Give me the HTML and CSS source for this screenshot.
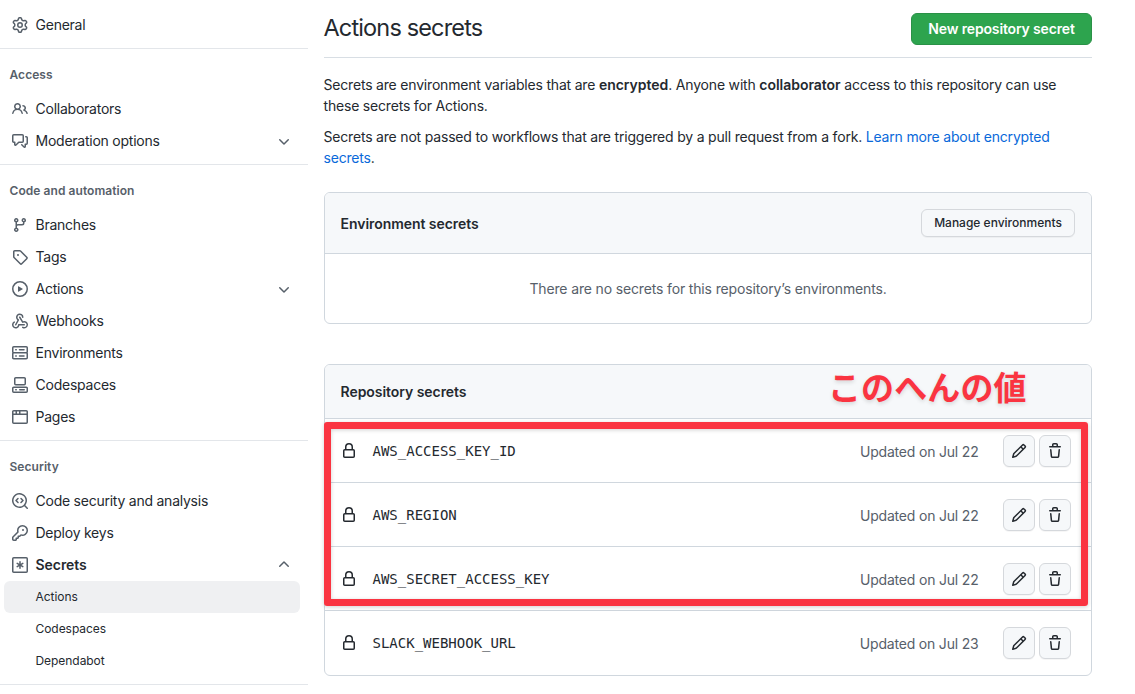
FILE: index.html
```html
<!DOCTYPE html>
<html lang="en">
<head>
<meta charset="utf-8">
<title>Actions secrets</title>
<link rel="stylesheet" href="styles.css">
</head>
<body>
<svg class="sprite" aria-hidden="true">
  <symbol id="gear" viewBox="0 0 16 16"><path fill-rule="evenodd" d="M7.429 1.525a6.593 6.593 0 011.142 0c.036.003.108.036.137.146l.289 1.105c.147.56.55.967.997 1.189.174.086.341.183.501.29.417.278.97.423 1.53.27l1.102-.303c.11-.03.175.016.195.046.219.31.41.641.573.989.014.031.022.11-.059.19l-.815.806c-.411.406-.562.957-.53 1.456a4.588 4.588 0 010 .582c-.032.499.119 1.05.53 1.456l.815.806c.08.08.073.159.059.19a6.494 6.494 0 01-.573.99c-.02.029-.086.074-.195.045l-1.103-.303c-.559-.153-1.112-.008-1.529.27-.16.107-.327.204-.5.29-.449.222-.851.628-.998 1.189l-.289 1.105c-.029.11-.101.143-.137.146a6.613 6.613 0 01-1.142 0c-.036-.003-.108-.037-.137-.146l-.289-1.105c-.147-.56-.55-.967-.997-1.189a4.502 4.502 0 01-.501-.29c-.417-.278-.97-.423-1.53-.27l-1.102.303c-.11.03-.175-.016-.195-.046a6.492 6.492 0 01-.573-.989c-.014-.031-.022-.11.059-.19l.815-.806c.411-.406.562-.957.53-1.456a4.587 4.587 0 010-.582c.032-.499-.119-1.05-.53-1.456l-.815-.806c-.08-.08-.073-.159-.059-.19a6.44 6.44 0 01.573-.99c.02-.029.086-.075.195-.045l1.103.303c.559.153 1.112.008 1.529-.27.16-.107.327-.204.5-.29.449-.222.851-.628.998-1.189l.289-1.105c.029-.11.101-.143.137-.146zM8 0c-.236 0-.47.01-.701.03-.743.065-1.29.615-1.458 1.261l-.29 1.106c-.017.066-.078.158-.211.224a5.994 5.994 0 00-.668.386c-.123.082-.233.09-.3.071L3.27 2.776c-.644-.177-1.392.02-1.82.63a7.977 7.977 0 00-.704 1.217c-.315.675-.111 1.422.363 1.891l.815.806c.05.048.098.147.088.294a6.084 6.084 0 000 .772c.01.147-.038.246-.088.294l-.815.806c-.474.469-.678 1.216-.363 1.891.2.428.436.835.704 1.218.428.609 1.176.806 1.82.63l1.103-.303c.066-.019.176-.011.299.071.213.143.436.272.668.386.133.066.194.158.212.224l.289 1.106c.169.646.715 1.196 1.458 1.26a8.094 8.094 0 001.402 0c.743-.064 1.29-.614 1.458-1.26l.29-1.106c.017-.066.078-.158.211-.224a5.98 5.98 0 00.668-.386c.123-.082.233-.09.3-.071l1.102.302c.644.177 1.392-.02 1.82-.63.268-.382.505-.789.704-1.217.315-.675.111-1.422-.364-1.891l-.814-.806c-.05-.048-.098-.147-.088-.294a6.1 6.1 0 000-.772c-.01-.147.039-.246.088-.294l.814-.806c.475-.469.679-1.216.364-1.891a7.992 7.992 0 00-.704-1.218c-.428-.609-1.176-.806-1.82-.63l-1.103.303c-.066.019-.176.011-.299-.071a5.991 5.991 0 00-.668-.386c-.133-.066-.194-.158-.212-.224L10.16 1.29C9.99.645 9.444.095 8.701.031A8.094 8.094 0 008 0zm1.5 8a1.5 1.5 0 11-3 0 1.5 1.5 0 013 0zM11 8a3 3 0 11-6 0 3 3 0 016 0z"/></symbol>
  <symbol id="people" viewBox="0 0 16 16"><path fill-rule="evenodd" d="M5.5 3.5a2 2 0 100 4 2 2 0 000-4zM2 5.5a3.5 3.5 0 115.898 2.549 5.507 5.507 0 013.034 4.084.75.75 0 11-1.482.235 4.001 4.001 0 00-7.9 0 .75.75 0 01-1.482-.236A5.507 5.507 0 013.102 8.05 3.49 3.49 0 012 5.5zM11 4a.75.75 0 100 1.5 1.5 1.5 0 01.666 2.844.75.75 0 00-.416.672v.352a.75.75 0 00.574.73c1.2.289 2.162 1.2 2.522 2.372a.75.75 0 101.434-.44 5.01 5.01 0 00-2.56-3.012A3 3 0 0011 4z"/></symbol>
  <symbol id="comments" viewBox="0 0 16 16"><path fill-rule="evenodd" d="M1.5 2.75a.25.25 0 01.25-.25h8.5a.25.25 0 01.25.25v5.5a.25.25 0 01-.25.25h-3.500a.75.75 0 00-.53.22L3.500 11.440V9.250a.75.75 0 00-.75-.75h-1a.25.25 0 01-.25-.25v-5.500zM1.750 1A1.750 1.750 0 000 2.750v5.500C0 9.216.784 10 1.750 10H2v1.543a1.457 1.457 0 002.487 1.030L7.061 10h3.189A1.750 1.750 0 0012 8.250v-5.500A1.750 1.750 0 0010.250 1h-8.500zM14.500 4.750a.25.25 0 00-.25-.25h-.5a.75.75 0 110-1.500h.5c.966 0 1.750.784 1.750 1.750v5.500A1.750 1.750 0 0114.250 12H14v1.543a1.457 1.457 0 01-2.487 1.030L9.220 12.280a.75.75 0 111.060-1.060l2.220 2.220v-2.190a.75.75 0 01.75-.75h1a.25.25 0 00.25-.25v-5.500z"/></symbol>
  <symbol id="branch" viewBox="0 0 16 16"><path fill-rule="evenodd" d="M11.750 2.500a.75.75 0 100 1.500.75.75 0 000-1.500zm-2.250.75a2.250 2.250 0 113 2.122V6A2.500 2.500 0 0110 8.500H6a1 1 0 00-1 1v1.128a2.251 2.251 0 11-1.500 0V5.372a2.250 2.250 0 111.500 0v1.836A2.492 2.492 0 016 7h4a1 1 0 001-1v-.628A2.250 2.250 0 019.500 3.250zM4.250 12a.75.75 0 100 1.500.75.75 0 000-1.500zM3.500 3.250a.75.75 0 111.500 0 .75.75 0 01-1.500 0z"/></symbol>
  <symbol id="tag" viewBox="0 0 16 16"><path fill-rule="evenodd" d="M2.500 7.775V2.750a.25.25 0 01.25-.25h5.025a.25.25 0 01.177.073l6.250 6.250a.25.25 0 010 .354l-5.025 5.025a.25.25 0 01-.354 0l-6.250-6.250a.25.25 0 01-.073-.177zm-1.500 0V2.750C1 1.784 1.784 1 2.750 1h5.025c.464 0 .91.184 1.238.513l6.250 6.250a1.750 1.750 0 010 2.474l-5.026 5.026a1.750 1.750 0 01-2.474 0l-6.250-6.250A1.750 1.750 0 011 7.775zM6 5a1 1 0 100 2 1 1 0 000-2z"/></symbol>
  <symbol id="play" viewBox="0 0 16 16"><path fill-rule="evenodd" d="M1.500 8a6.500 6.500 0 1113 0 6.500 6.500 0 01-13 0zM8 0a8 8 0 100 16A8 8 0 008 0zM6.379 5.227A.25.25 0 006 5.442v5.117a.25.25 0 00.379.214l4.264-2.559a.25.25 0 000-.428L6.379 5.227z"/></symbol>
  <symbol id="webhook" viewBox="0 0 16 16"><path fill-rule="evenodd" d="M5.500 4.250a2.250 2.250 0 014.500 0 .75.75 0 001.500 0 3.750 3.750 0 10-6.140 2.889l-2.272 4.258a.75.75 0 001.324.706L7 7.250a.75.75 0 00-.309-1.015A2.250 2.250 0 015.500 4.250z"/><path fill-rule="evenodd" d="M7.364 3.607a.75.75 0 011.030.257l2.608 4.349a3.750 3.750 0 11-.628 6.785.75.75 0 01.752-1.299 2.250 2.250 0 10-.033-3.880.75.75 0 01-1.030-.256L7.107 4.636a.75.75 0 01.257-1.030z"/><path fill-rule="evenodd" d="M2.900 8.776A.75.75 0 012.625 9.800 2.250 2.250 0 106 11.750a.75.75 0 01.75-.751h5.500a.75.75 0 010 1.500H7.425a3.751 3.751 0 11-5.550-3.998.75.75 0 011.024.274z"/></symbol>
  <symbol id="server" viewBox="0 0 16 16"><path fill-rule="evenodd" d="M1.750 1A1.750 1.750 0 000 2.750v4c0 .372.116.717.314 1a1.742 1.742 0 00-.314 1v4c0 .966.784 1.750 1.750 1.750h12.500A1.750 1.750 0 0016 12.750v-4c0-.372-.116-.717-.314-1 .198-.283.314-.628.314-1v-4A1.750 1.750 0 0014.250 1H1.750zm0 7.500a.25.25 0 00-.25.25v4c0 .138.112.25.25.25h12.500a.25.25 0 00.25-.25v-4a.25.25 0 00-.25-.25H1.750zM14.250 7a.25.25 0 00.25-.25v-4a.25.25 0 00-.25-.25H1.750a.25.25 0 00-.25.25v4c0 .138.112.25.25.25h12.500zm-7.500 4a.75.75 0 01.75-.75h4.500a.75.75 0 010 1.500H7.500a.75.75 0 01-.75-.75zm.75-7a.75.75 0 000 1.500H12A.75.75 0 0012 4H7.500zM3 4.750A.75.75 0 013.750 4h.5a.75.75 0 010 1.500h-.5A.75.75 0 013 4.750zm.75 5.500a.75.75 0 000 1.500h.5a.75.75 0 000-1.500h-.5z"/></symbol>
  <symbol id="codespaces" viewBox="0 0 16 16"><path fill-rule="evenodd" d="M2 1.750C2 .784 2.784 0 3.750 0h8.500C13.216 0 14 .784 14 1.750v5a1.750 1.750 0 01-1.750 1.750h-8.500A1.750 1.750 0 012 6.750v-5zm1.750-.25a.25.25 0 00-.25.25v5c0 .138.112.25.25.25h8.500a.25.25 0 00.25-.25v-5a.25.25 0 00-.25-.25h-8.500zM0 11.250c0-.966.784-1.750 1.750-1.750h12.500c.966 0 1.750.784 1.750 1.750v3A1.750 1.750 0 0114.250 16H1.750A1.750 1.750 0 010 14.250v-3zM1.750 11a.25.25 0 00-.25.25v3c0 .138.112.25.25.25h12.500a.25.25 0 00.25-.25v-3a.25.25 0 00-.25-.25H1.750zM3 12.750a.75.75 0 01.75-.75h.5a.75.75 0 010 1.500h-.5a.75.75 0 01-.75-.75zm4 0a.75.75 0 01.75-.75h4.500a.75.75 0 010 1.500h-4.500a.75.75 0 01-.75-.75z"/></symbol>
  <symbol id="browser" viewBox="0 0 16 16"><path fill-rule="evenodd" d="M0 2.750C0 1.784.784 1 1.750 1h12.500c.966 0 1.750.784 1.750 1.750v10.500A1.750 1.750 0 0114.250 15H1.750A1.750 1.750 0 010 13.250V2.750zm1.750-.25a.25.25 0 00-.25.25V4.500h2v-2H1.750zM5 2.500v2h2v-2H5zm3.500 0v2h6V2.750a.25.25 0 00-.25-.25H8.500zm6 3.500h-13v7.250c0 .138.112.25.25.25h12.500a.25.25 0 00.25-.25V6z"/></symbol>
  <symbol id="codescan" viewBox="0 0 16 16"><path d="M8.470 4.970a.75.75 0 000 1.060L9.940 7.500 8.470 8.970a.75.75 0 101.060 1.060l2-2a.75.75 0 000-1.060l-2-2a.75.75 0 00-1.060 0zM6.530 6.030a.75.75 0 00-1.060-1.060l-2 2a.75.75 0 000 1.060l2 2a.75.75 0 101.060-1.060L5.060 7.500l1.470-1.470z"/><path fill-rule="evenodd" d="M12.246 13.307a7.500 7.500 0 111.060-1.060l2.474 2.473a.75.75 0 11-1.060 1.060l-2.474-2.473zM1.500 7.500a6 6 0 1110.386 4.094.75.75 0 00-.292.293A6 6 0 011.500 7.500z"/></symbol>
  <symbol id="key" viewBox="0 0 16 16"><path fill-rule="evenodd" d="M6.500 5.500a4 4 0 112.731 3.795.75.75 0 00-.768.180L7.440 10.500H6.250a.75.75 0 00-.75.750v1.190l-.06.060H4.250a.75.75 0 00-.75.750v1.190l-.06.060H1.750a.25.25 0 01-.25-.25v-1.690l5.024-5.023a.75.75 0 00.181-.768A3.995 3.995 0 016.500 5.500zm4-5.500a5.500 5.500 0 00-5.348 6.788L.22 11.720a.75.75 0 00-.22.530v2C0 15.216.784 16 1.750 16h2a.75.75 0 00.530-.22l.5-.5a.75.75 0 00.22-.530V14h.750a.75.75 0 00.530-.22l.5-.5a.75.75 0 00.22-.530V12h.750a.75.75 0 00.530-.22l.932-.932A5.500 5.500 0 1010.500 0zm.5 6a1 1 0 100-2 1 1 0 000 2z"/></symbol>
  <symbol id="asterisk" viewBox="0 0 16 16"><path fill-rule="evenodd" d="M1.750 0A1.750 1.750 0 000 1.750v12.500C0 15.216.784 16 1.750 16h12.500A1.750 1.750 0 0016 14.250V1.750A1.750 1.750 0 0014.250 0H1.750zM1.500 1.750a.25.25 0 01.25-.25h12.500a.25.25 0 01.25.25v12.500a.25.25 0 01-.25.25H1.750a.25.25 0 01-.25-.25V1.750zM8 4a.75.75 0 01.75.75V6.700l1.690-.975a.75.75 0 01.75 1.300L9.500 8l1.690.976a.75.75 0 01-.75 1.298L8.750 9.300v1.951a.75.75 0 01-1.500 0V9.299l-1.690.976a.75.75 0 01-.75-1.300L6.500 8l-1.690-.975a.75.75 0 01.75-1.300l1.690.976V4.750A.75.75 0 018 4z"/></symbol>
  <symbol id="chevron-down" viewBox="0 0 16 16"><path fill-rule="evenodd" d="M12.780 6.220a.75.75 0 010 1.060l-4.250 4.250a.75.75 0 01-1.060 0L3.220 7.280a.75.75 0 011.060-1.060L8 9.940l3.720-3.720a.75.75 0 011.060 0z"/></symbol>
  <symbol id="chevron-up" viewBox="0 0 16 16"><path fill-rule="evenodd" d="M3.220 9.780a.75.75 0 010-1.060l4.250-4.250a.75.75 0 011.060 0l4.250 4.250a.75.75 0 01-1.060 1.060L8 6.060 4.280 9.780a.75.75 0 01-1.060 0z"/></symbol>
  <symbol id="lock" viewBox="0 0 16 16"><path fill-rule="evenodd" d="M4 4v2h-.25A1.750 1.750 0 002 7.750v5.500c0 .966.784 1.750 1.750 1.750h8.500A1.750 1.750 0 0014 13.250v-5.500A1.750 1.750 0 0012.250 6H12V4a4 4 0 10-8 0zm6.500 2V4a2.500 2.500 0 10-5 0v2h5zM12 7.500h.25a.25.25 0 01.25.25v5.500a.25.25 0 01-.25.25h-8.500a.25.25 0 01-.25-.25v-5.500a.25.25 0 01.25-.25H12z"/></symbol>
  <symbol id="pencil" viewBox="0 0 16 16"><path fill-rule="evenodd" d="M11.013 1.427a1.750 1.750 0 012.474 0l1.086 1.086a1.750 1.750 0 010 2.474l-8.610 8.610c-.21.21-.47.364-.756.445l-3.251.930a.75.75 0 01-.927-.928l.929-3.250a1.750 1.750 0 01.445-.758l8.610-8.610zm1.414 1.060a.25.25 0 00-.354 0L10.811 3.750l1.439 1.440 1.263-1.263a.25.25 0 000-.354l-1.086-1.086zM11.189 6.250L9.750 4.810l-6.286 6.287a.25.25 0 00-.064.108l-.558 1.953 1.953-.558a.249.249 0 00.108-.064l6.286-6.286z"/></symbol>
  <symbol id="trash" viewBox="0 0 16 16"><path fill-rule="evenodd" d="M6.500 1.750a.25.25 0 01.25-.25h2.500a.25.25 0 01.25.25V3h-3V1.750zm4.500 0V3h2.250a.75.75 0 010 1.500H2.750a.75.75 0 010-1.500H5V1.750C5 .784 5.784 0 6.750 0h2.500C10.216 0 11 .784 11 1.750zM4.496 6.675a.75.75 0 10-1.492.150l.660 6.600A1.750 1.750 0 005.405 15h5.190c.900 0 1.652-.681 1.741-1.576l.660-6.600a.75.75 0 00-1.492-.149l-.660 6.600a.25.25 0 01-.249.225h-5.190a.25.25 0 01-.249-.225l-.660-6.600z"/></symbol>
</svg>

<div class="layout">
  <nav class="sidebar">
    <a class="nav-item"><svg class="icon"><use href="#gear"/></svg><span>General</span></a>

    <section class="nav-group">
      <h3 class="nav-title">Access</h3>
      <a class="nav-item"><svg class="icon"><use href="#people"/></svg><span>Collaborators</span></a>
      <a class="nav-item"><svg class="icon"><use href="#comments"/></svg><span>Moderation options</span><svg class="icon chevron"><use href="#chevron-down"/></svg></a>
    </section>

    <section class="nav-group">
      <h3 class="nav-title">Code and automation</h3>
      <a class="nav-item"><svg class="icon"><use href="#branch"/></svg><span>Branches</span></a>
      <a class="nav-item"><svg class="icon"><use href="#tag"/></svg><span>Tags</span></a>
      <a class="nav-item"><svg class="icon"><use href="#play"/></svg><span>Actions</span><svg class="icon chevron"><use href="#chevron-down"/></svg></a>
      <a class="nav-item"><svg class="icon"><use href="#webhook"/></svg><span>Webhooks</span></a>
      <a class="nav-item"><svg class="icon"><use href="#server"/></svg><span>Environments</span></a>
      <a class="nav-item"><svg class="icon"><use href="#codespaces"/></svg><span>Codespaces</span></a>
      <a class="nav-item"><svg class="icon"><use href="#browser"/></svg><span>Pages</span></a>
    </section>

    <section class="nav-group">
      <h3 class="nav-title">Security</h3>
      <a class="nav-item"><svg class="icon"><use href="#codescan"/></svg><span>Code security and analysis</span></a>
      <a class="nav-item"><svg class="icon"><use href="#key"/></svg><span>Deploy keys</span></a>
      <a class="nav-item open"><svg class="icon"><use href="#asterisk"/></svg><span>Secrets</span><svg class="icon chevron"><use href="#chevron-up"/></svg></a>
      <a class="sub-item current">Actions</a>
      <a class="sub-item">Codespaces</a>
      <a class="sub-item">Dependabot</a>
    </section>
    <div class="nav-group"></div>
  </nav>

  <main class="content">
    <header class="page-head">
      <h1 class="page-title">Actions secrets</h1>
      <button class="btn-primary">New repository secret</button>
    </header>

    <p class="intro">Secrets are environment variables that are <strong>encrypted</strong>. Anyone with <strong>collaborator</strong> access to this repository can use<br>these secrets for Actions.</p>
    <p class="intro">Secrets are not passed to workflows that are triggered by a pull request from a fork. <a class="link">Learn more about encrypted<br>secrets</a>.</p>

    <section class="box env-box">
      <div class="box-head env-head">
        <h2 class="box-title">Environment secrets</h2>
        <button class="btn-small">Manage environments</button>
      </div>
      <div class="empty">There are no secrets for this repository’s environments.</div>
    </section>

    <section class="box repo-box">
      <div class="box-head repo-head">
        <h2 class="box-title">Repository secrets</h2>
      </div>
      <div class="row"><svg class="icon"><use href="#lock"/></svg><code class="name">AWS_ACCESS_KEY_ID</code><span class="updated">Updated on Jul 22</span><button class="btn-icon"><svg class="icon"><use href="#pencil"/></svg></button><button class="btn-icon"><svg class="icon"><use href="#trash"/></svg></button></div>
      <div class="row"><svg class="icon"><use href="#lock"/></svg><code class="name">AWS_REGION</code><span class="updated">Updated on Jul 22</span><button class="btn-icon"><svg class="icon"><use href="#pencil"/></svg></button><button class="btn-icon"><svg class="icon"><use href="#trash"/></svg></button></div>
      <div class="row"><svg class="icon"><use href="#lock"/></svg><code class="name">AWS_SECRET_ACCESS_KEY</code><span class="updated">Updated on Jul 22</span><button class="btn-icon"><svg class="icon"><use href="#pencil"/></svg></button><button class="btn-icon"><svg class="icon"><use href="#trash"/></svg></button></div>
      <div class="row last"><svg class="icon"><use href="#lock"/></svg><code class="name">SLACK_WEBHOOK_URL</code><span class="updated">Updated on Jul 23</span><button class="btn-icon"><svg class="icon"><use href="#pencil"/></svg></button><button class="btn-icon"><svg class="icon"><use href="#trash"/></svg></button></div>
      <div class="callout-frame"></div>
      <div class="callout-text" lang="ja">このへんの値</div>
    </section>
  </main>
</div>
</body>
</html>
```
FILE: styles.css
```css
* { box-sizing: border-box; }
body {
  margin: 0;
  height: 694px;
  overflow: hidden;
  background: #fff;
  color: #24292f;
  font: 14px/21px Inter, "Noto Sans CJK JP", sans-serif;
  letter-spacing: -0.19px;
}
h1, h2, h3, p { margin: 0; }
button { font: inherit; letter-spacing: inherit; color: inherit; padding: 0; white-space: nowrap; }
.sprite { display: none; }
.icon { width: 16px; height: 16px; fill: currentColor; flex: none; display: block; }

.layout { display: flex; gap: 15.5px; }

/* Sidebar */
.sidebar { width: 308px; padding-top: 9px; flex: none; }
.nav-item {
  display: flex;
  align-items: center;
  gap: 7.5px;
  height: 32px;
  padding: 0 16px 0 12px;
  letter-spacing: -0.24px;
}
.nav-item span { padding-bottom: 2px; }
.nav-item .icon { color: #57606a; }
.nav-item .chevron { margin-left: auto; }
.nav-item.open { font-weight: 600; letter-spacing: -0.05px; }
.nav-group { margin-top: 7px; border-top: 1px solid #e3e6ea; }
.nav-title {
  height: 44px;
  padding: 17px 0 0 9.5px;
  font-size: 12px;
  line-height: 18px;
  font-weight: 600;
  letter-spacing: 0.06px;
  color: #57606a;
}
.sub-item {
  display: block;
  height: 32px;
  margin: 0 8px 0 4px;
  padding-left: 31.5px;
  border-radius: 6px;
  font-size: 12px;
  line-height: 32px;
  letter-spacing: -0.05px;
}
.sub-item.current { background: #eff0f2; }

/* Main column */
.content { width: 768.5px; }
.page-head {
  display: flex;
  justify-content: space-between;
  height: 58px;
  padding-top: 13px;
  margin-bottom: 16px;
  border-bottom: 1px solid #d8dee4;
}
.page-title { font-size: 23.5px; line-height: 30px; font-weight: 400; letter-spacing: -0.85px; }
.btn-primary {
  width: 181px;
  height: 32px;
  padding-bottom: 2px;
  border: 1px solid #2a9147;
  border-radius: 6px;
  background: #2da44e;
  color: #fff;
  font-weight: 600;
  letter-spacing: -0.15px;
}
.intro { margin-bottom: 10px; white-space: nowrap; }
.intro strong { font-weight: 600; letter-spacing: -0.03px; }
.link { color: #0969da; }

.box { margin-left: 0.5px; border: 1px solid #d0d7de; border-radius: 6px; }
.box-head {
  display: flex;
  align-items: center;
  justify-content: space-between;
  padding: 0 16px 0 15.5px;
  background: #f6f8fa;
  border-bottom: 1px solid #d0d7de;
  border-radius: 5px 5px 0 0;
}
.box-title { font-size: 14px; font-weight: 600; letter-spacing: -0.05px; }
.env-box { height: 132px; margin-top: 24px; }
.env-head { height: 61px; }
.btn-small {
  width: 154px;
  height: 28px;
  padding-bottom: 2px;
  border: 1px solid #d5d8dc;
  border-radius: 6px;
  background: #f6f8fa;
  box-shadow: 0 1px 0 rgba(27, 31, 36, 0.04);
  font-size: 12px;
  font-weight: 500;
  letter-spacing: 0;
}
.empty { line-height: 70px; text-align: center; color: #57606a; letter-spacing: -0.15px; }

.repo-box { position: relative; margin-top: 40px; }
.repo-head { height: 54px; }
.row { display: flex; align-items: center; height: 64px; padding: 0 20px 0 16px; border-bottom: 1px solid #d0d7de; }
.row.last { border-bottom: 0; padding-bottom: 1px; }
.name { margin-left: 15.5px; padding-top: 2px; font: 14px/21px "DejaVu Sans Mono", monospace; letter-spacing: 0; }
.updated { margin-left: auto; margin-right: 24.5px; padding-top: 2px; color: #57606a; }
.btn-icon {
  display: grid;
  place-items: center;
  width: 32px;
  height: 32px;
  border: 1px solid #d5d8dc;
  border-radius: 6px;
  background: #f6f8fa;
  box-shadow: 0 1px 0 rgba(27, 31, 36, 0.04);
}
.btn-icon + .btn-icon { margin-left: 4px; }

/* Annotations over the secrets list */
.callout-frame {
  position: absolute;
  left: -1px;
  top: 57px;
  width: 764px;
  height: 184px;
  border: 7px solid #fa3441;
  border-radius: 3px;
  box-shadow: 0 1px 4px rgba(0, 0, 0, 0.18), inset 0 1px 4px rgba(0, 0, 0, 0.18);
}
.callout-text {
  position: absolute;
  left: 503px;
  top: -2px;
  font: 700 33px/46px "Noto Sans CJK JP", sans-serif;
  letter-spacing: 0.1px;
  color: #fa3441;
  text-shadow: 0 2px 4px rgba(0, 0, 0, 0.14);
  white-space: nowrap;
}
```
